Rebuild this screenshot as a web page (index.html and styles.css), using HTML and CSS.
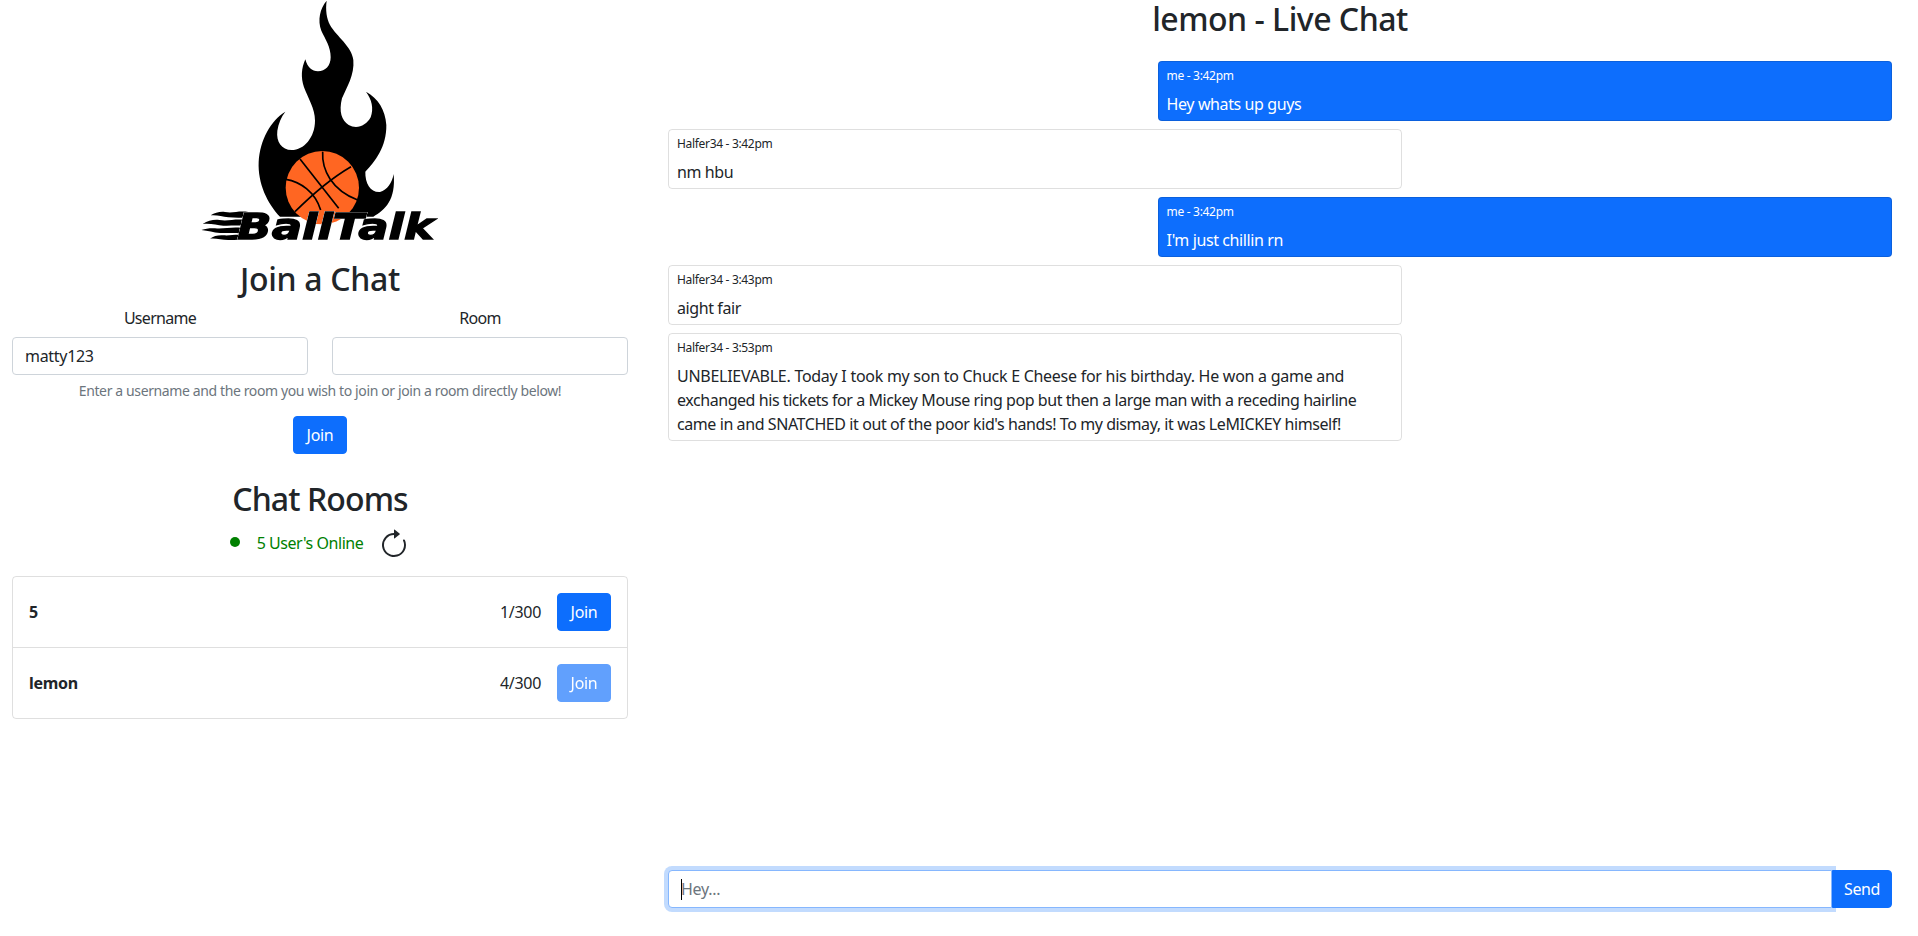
FILE: index.html
```html
<!DOCTYPE html>
<html lang="en">
<head>
<meta charset="utf-8">
<title>BallTalk - lemon</title>
<link rel="stylesheet" href="styles.css">
</head>
<body>
<div class="page">
  <aside class="side">
    <svg class="logo" viewBox="0 0 840 780" role="img" aria-label="BallTalk logo">
      <path class="flame" d="M440 2C420 25 412 60 424 92C436 118 452 140 452 172C452 198 436 214 414 214C396 214 382 202 376 178C364 205 362 232 372 262C384 295 405 325 405 362C405 412 372 450 335 450C305 450 288 425 292 392C295 370 304 350 316 335C272 362 240 420 236 485C233 550 262 610 300 650L580 650C615 630 648 600 641 522C636 548 622 570 600 576C572 578 555 550 556 515C585 485 620 440 619 375C616 330 595 295 558 275C575 298 582 325 572 352C558 378 530 388 506 375C485 362 476 335 486 295C500 262 524 225 520 180C516 140 470 110 450 75C440 55 436 30 440 2Z"/>
      <circle class="ball" cx="427" cy="563" r="110"/>
      <g class="seams">
        <path d="M360 477L476 625"/>
        <path d="M513 500C470 525 405 575 345 635"/>
        <path d="M428 455C425 510 455 570 533 600"/>
        <path d="M318 538C360 545 405 575 422 630"/>
      </g>
      <g class="streaks">
        <path d="M205 636C175 632 160 640 135 636C120 634 105 638 92 646C112 644 125 650 145 652C165 654 185 652 205 654Z"/>
        <path d="M195 660C165 656 145 664 118 660C100 658 85 662 68 672C92 669 110 676 130 677C150 678 170 675 195 678Z"/>
        <path d="M185 684C155 680 130 688 105 685C90 684 78 686 64 690C85 692 100 698 120 699C145 700 165 698 185 701Z"/>
        <path d="M195 706C170 702 150 708 130 706C115 705 100 708 90 716C108 714 125 720 145 720C165 720 180 718 195 720Z"/>
      </g>
      <text class="logo-text" x="172" y="716" textLength="590" lengthAdjust="spacingAndGlyphs">BallTalk</text>
    </svg>
    <h2 class="title">Join a Chat</h2>
    <form class="join-form">
      <div class="fields">
        <div class="field">
          <label class="field-label" for="username">Username</label>
          <input class="text-input" id="username" type="text" value="matty123">
        </div>
        <div class="field">
          <label class="field-label" for="room">Room</label>
          <input class="text-input" id="room" type="text">
        </div>
      </div>
      <p class="help">Enter a username and the room you wish to join or join a room directly below!</p>
      <button class="btn" type="button">Join</button>
    </form>
    <h2 class="title rooms-title">Chat Rooms</h2>
    <div class="status">
      <span class="dot"></span>
      <span class="online">5 User's Online</span>
      <svg class="refresh" viewBox="0 0 16 16" aria-hidden="true">
        <path fill-rule="evenodd" d="M8 3a5 5 0 1 0 4.546 2.914.5.5 0 0 1 .908-.417A6 6 0 1 1 8 2v1z"/>
        <path d="M8 4.466V.534a.25.25 0 0 1 .41-.192l2.36 1.966c.12.1.12.284 0 .384L8.41 4.658A.25.25 0 0 1 8 4.466z"/>
      </svg>
    </div>
    <ul class="rooms">
      <li class="room">
        <strong class="room-name">5</strong>
        <span class="room-count">1/300</span>
        <button class="btn" type="button">Join</button>
      </li>
      <li class="room">
        <strong class="room-name">lemon</strong>
        <span class="room-count">4/300</span>
        <button class="btn btn-disabled" type="button" disabled>Join</button>
      </li>
    </ul>
  </aside>
  <main class="chat">
    <h2 class="title chat-title">lemon - Live Chat</h2>
    <div class="messages">
      <div class="msg mine"><div class="meta">me - 3:42pm</div><div class="body">Hey whats up guys</div></div>
      <div class="msg"><div class="meta">Halfer34 - 3:42pm</div><div class="body">nm hbu</div></div>
      <div class="msg mine"><div class="meta">me - 3:42pm</div><div class="body">I'm just chillin rn</div></div>
      <div class="msg"><div class="meta">Halfer34 - 3:43pm</div><div class="body">aight fair</div></div>
      <div class="msg"><div class="meta">Halfer34 - 3:53pm</div><div class="body"><span class="line line-a">UNBELIEVABLE. Today I took my son to Chuck E Cheese for his birthday. He won a game and</span> <span class="line line-b">exchanged his tickets for a Mickey Mouse ring pop but then a large man with a receding hairline</span> <span class="line line-c">came in and SNATCHED it out of the poor kid's hands! To my dismay, it was LeMICKEY himself!</span></div></div>
    </div>
    <div class="composer">
      <span class="caret"></span>
      <input class="text-input composer-input" type="text" placeholder="Hey...">
      <button class="btn composer-send" type="button">Send</button>
    </div>
  </main>
</div>
</body>
</html>
```
FILE: styles.css
```css
* { box-sizing: border-box; }
html, body { margin: 0; height: 100%; }
body {
  font-family: "Noto Sans", "Open Sans", sans-serif;
  font-size: 16px;
  line-height: 1.5;
  letter-spacing: -0.3px;
  color: #212529;
  background: #fff;
  overflow: hidden;
}
.page { display: grid; grid-template-columns: 640px 1fr; height: 936px; }
.side { padding: 0 12px; text-align: center; }
.logo { display: block; width: 280px; height: 260px; margin: 0 auto 0 168px; }
.flame { fill: #000; }
.ball { fill: #ff6622; }
.seams path { fill: none; stroke: #000; stroke-width: 5; }
.streaks path { fill: #000; }
.logo-text {
  font-family: "DejaVu Sans", sans-serif;
  font-weight: 700;
  font-style: italic;
  font-size: 108px;
  letter-spacing: 0;
  fill: #000;
  stroke: #000;
  stroke-width: 4px;
  filter: drop-shadow(0 0 1px #fff) drop-shadow(0 0 1px #fff);
}
.title { margin: 0 0 8px; font-size: 32px; font-weight: 500; line-height: 1.2; }
.fields { display: grid; grid-template-columns: 1fr 1fr; gap: 24px; }
.field { display: flex; flex-direction: column; }
.field-label { margin-bottom: 7px; letter-spacing: -0.7px; }
.text-input {
  width: 100%;
  height: 38px;
  padding: 6px 12px;
  font: inherit;
  letter-spacing: inherit;
  color: #212529;
  border: 1px solid #ced4da;
  border-radius: 4px;
  background: #fff;
  outline: none;
}
.text-input::placeholder { color: #6c757d; opacity: 1; }
.help { margin: 5px 0 15px; font-size: 14px; letter-spacing: -0.38px; color: #6c757d; }
.btn {
  min-width: 54px;
  height: 38px;
  padding: 6px 12px;
  font: inherit;
  letter-spacing: inherit;
  color: #fff;
  background: #0d6efd;
  border: 1px solid #0d6efd;
  border-radius: 4px;
}
.btn-disabled { opacity: .65; }
.rooms-title { margin-top: 26px; letter-spacing: -0.9px; }
.status { display: flex; align-items: flex-start; justify-content: center; gap: 17px; height: 49px; }
.dot { width: 10px; height: 10px; margin-top: 10px; border-radius: 50%; background: #008000; }
.online { margin-top: 4px; color: #008000; line-height: 24px; letter-spacing: -0.45px; }
.refresh { width: 32px; height: 32px; margin-left: -2px; margin-top: 2px; fill: #212529; }
.rooms { margin: 0; padding: 0; list-style: none; border: 1px solid rgba(0,0,0,.125); border-radius: 4px; }
.room { display: flex; align-items: center; gap: 16px; padding: 16px; }
.room + .room { border-top: 1px solid rgba(0,0,0,.125); }
.room-name { margin-right: auto; font-weight: 700; }
.chat { display: flex; flex-direction: column; padding: 0 26px 28px 28px; }
.chat-title { margin: 0; text-align: center; letter-spacing: -0.5px; }
.messages { flex: 1; display: flex; flex-direction: column; gap: 8px; padding-top: 23px; }
.msg {
  width: 60%;
  padding: 5px 8px 4px;
  border: 1px solid rgba(0,0,0,.125);
  border-radius: 4px;
}
.mine { align-self: flex-end; color: #fff; background: #0d6efd; }
.meta { margin-bottom: 7px; font-size: 12px; line-height: 18px; letter-spacing: -0.32px; }
.body { letter-spacing: -0.4px; }
.line { display: block; }
.line-a { letter-spacing: -0.27px; }
.line-b { letter-spacing: -0.44px; }
.line-c { letter-spacing: -0.42px; }
.composer { position: relative; display: flex; }
.composer-input { flex: 1; border-color: #86b7fe; box-shadow: 0 0 0 4px rgba(13,110,253,.25); border-radius: 4px 0 0 4px; }
.composer-send { position: relative; width: 60px; padding-left: 11px; text-align: left; letter-spacing: -0.4px; border-radius: 0 4px 4px 0; }
.caret { position: absolute; left: 13px; top: 9px; z-index: 1; width: 1px; height: 21px; background: #000; }
```
